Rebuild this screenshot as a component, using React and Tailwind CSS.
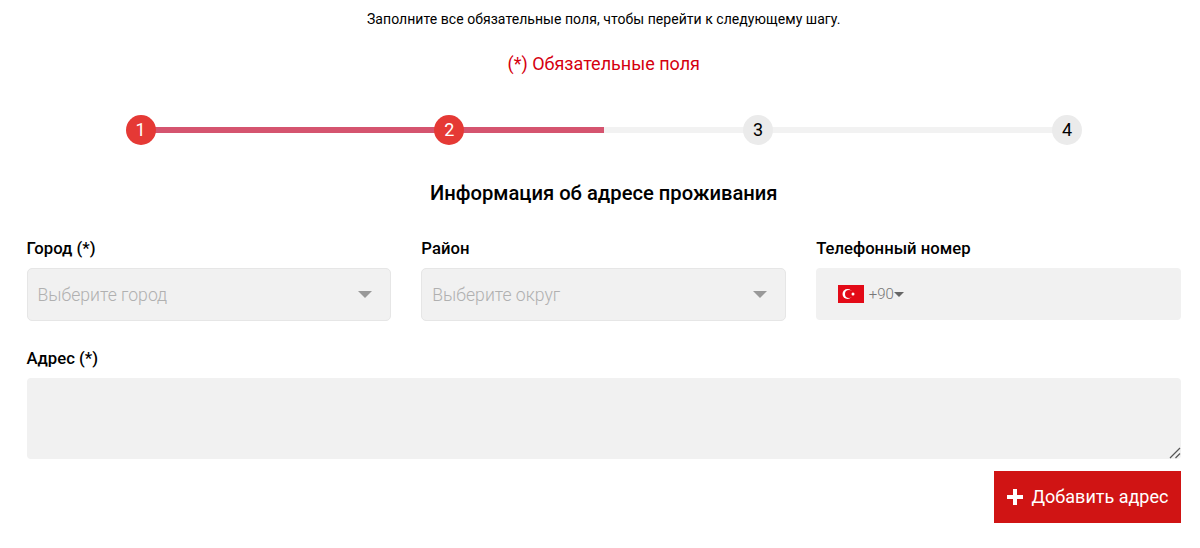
import React from 'react';

const Caret = ({ className }) => (
  <svg width="14" height="7" viewBox="0 0 14 7" className={className}>
    <path d="M0 0h14L7 7z" fill="currentColor" />
  </svg>
);

const TurkeyFlag = () => (
  <svg width="26" height="18" viewBox="0 0 26 18">
    <rect width="26" height="18" fill="#e30a17" />
    <circle cx="9.5" cy="9" r="5" fill="#fff" />
    <circle cx="11" cy="9" r="4" fill="#e30a17" />
    <circle cx="15" cy="9" r="1.5" fill="#fff" />
  </svg>
);

const Step = ({ n, active }) => (
  <div className={`relative w-[30px] h-[30px] rounded-full flex items-center justify-center text-lg ${active ? 'bg-[#e53935] text-white' : 'bg-[#ebebeb] text-black'}`}>
    {n}
  </div>
);

const SelectField = ({ label, placeholder }) => (
  <div>
    <label className="block text-[16.7px] font-medium text-black leading-[19px] mb-[10px]">{label}</label>
    <div className="h-[53px] bg-[#f1f1f1] border border-[#e6e6e6] rounded-[5px] pl-[10px] pr-[18px] flex items-center justify-between">
      <span className="pt-[2px] text-[17.6px] font-light text-[#b0b0b0]">{placeholder}</span>
      <Caret className="text-[#999999]" />
    </div>
  </div>
);

export default function App() {
  return (
    <div className="bg-white w-full h-[548px] overflow-hidden pl-[26.5px] pr-[19px] font-['Roboto',sans-serif]">
      <p className="pt-[9px] text-center text-sm tracking-[0.05px] leading-[20px] text-black">
        Заполните все обязательные поля, чтобы перейти к следующему шагу.
      </p>
      <p className="mt-[22px] text-center text-lg leading-[26px] text-[#d5000f]">(*) Обязательные поля</p>

      <div className="relative ml-[99px] mr-[99px] mt-[38px] flex justify-between">
        <div className="absolute left-[15px] right-[15px] top-[12px] h-[6px] bg-[#f2f2f2]">
          <div className="w-1/2 h-full bg-[#d5546f]" />
        </div>
        <Step n={1} active />
        <Step n={2} active />
        <Step n={3} />
        <Step n={4} />
      </div>

      <h2 className="mt-[33px] text-center text-[20.2px] font-medium leading-[30px] text-black">
        Информация об адресе проживания
      </h2>

      <div className="mt-[31px] grid grid-cols-3 gap-[30px]">
        <SelectField label="Город (*)" placeholder="Выберите город" />
        <SelectField label="Район" placeholder="Выберите округ" />
        <div>
          <label className="block text-[16.7px] font-medium text-black leading-[19px] mb-[10px]">Телефонный номер</label>
          <div className="h-[52px] bg-[#f1f1f1] rounded-[4px] pl-[21.5px] flex items-center">
            <TurkeyFlag />
            <span className="ml-[5px] text-[15px] font-light text-[#777777]">+90</span>
            <Caret className="w-[10px] h-[5px] text-[#666666]" />
          </div>
        </div>
      </div>

      <div className="mt-[28px]">
        <label className="block text-[16.7px] font-medium text-black leading-[19px] mb-[10px]">Адрес (*)</label>
        <div className="relative">
          <textarea className="block w-full h-[81px] bg-[#f1f1f1] rounded-[4px] outline-none resize-none" />
          <svg width="12" height="12" viewBox="0 0 12 12" className="absolute right-0 bottom-0">
            <path d="M1 11L11 1M6.5 11L11 6.5" stroke="#555555" strokeWidth="1.2" fill="none" />
          </svg>
        </div>
      </div>

      <div className="mt-[12px] flex justify-end">
        <button className="h-[52px] w-[187px] bg-[#d01414] text-white text-lg flex items-center justify-center gap-[9px]">
          <svg width="16" height="16" viewBox="0 0 16 16">
            <path d="M6 0h4v6h6v4h-6v6H6v-6H0V6h6z" fill="#fff" />
          </svg>
          Добавить адрес
        </button>
      </div>
    </div>
  );
}
